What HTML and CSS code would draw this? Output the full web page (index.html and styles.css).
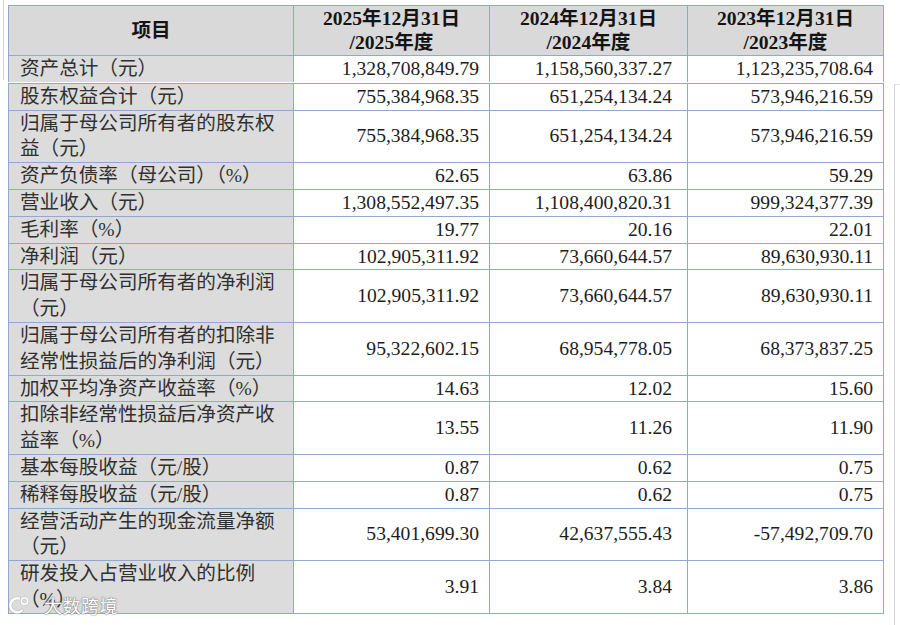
FILE: index.html
```html
<!DOCTYPE html>
<html lang="zh-CN">
<head>
<meta charset="utf-8">
<title>主要财务数据</title>
<link rel="stylesheet" href="styles.css">
</head>
<body>
<div class="page">
  <div class="frame-left"></div>
  <div class="frame-right"></div>
  <table class="fin">
    <colgroup>
      <col class="c-item">
      <col class="c-y1">
      <col class="c-y2">
      <col class="c-y3">
    </colgroup>
    <thead>
      <tr>
        <th>项目</th>
        <th>2025年12月31日<br>/2025年度</th>
        <th>2024年12月31日<br>/2024年度</th>
        <th>2023年12月31日<br>/2023年度</th>
      </tr>
    </thead>
    <tbody>
      <tr class="first">
        <td class="item">资产总计（元）</td>
        <td class="num">1,328,708,849.79</td>
        <td class="num mid">1,158,560,337.27</td>
        <td class="num">1,123,235,708.64</td>
      </tr>
      <tr class="seam"><td colspan="4"></td></tr>
      <tr>
        <td class="item">股东权益合计（元）</td>
        <td class="num">755,384,968.35</td>
        <td class="num mid">651,254,134.24</td>
        <td class="num">573,946,216.59</td>
      </tr>
      <tr>
        <td class="item">归属于母公司所有者的股东权益（元）</td>
        <td class="num">755,384,968.35</td>
        <td class="num mid">651,254,134.24</td>
        <td class="num">573,946,216.59</td>
      </tr>
      <tr>
        <td class="item">资产负债率（母公司）（%）</td>
        <td class="num">62.65</td>
        <td class="num mid">63.86</td>
        <td class="num">59.29</td>
      </tr>
      <tr>
        <td class="item">营业收入（元）</td>
        <td class="num">1,308,552,497.35</td>
        <td class="num mid">1,108,400,820.31</td>
        <td class="num">999,324,377.39</td>
      </tr>
      <tr>
        <td class="item">毛利率（%）</td>
        <td class="num">19.77</td>
        <td class="num mid">20.16</td>
        <td class="num">22.01</td>
      </tr>
      <tr>
        <td class="item">净利润（元）</td>
        <td class="num">102,905,311.92</td>
        <td class="num mid">73,660,644.57</td>
        <td class="num">89,630,930.11</td>
      </tr>
      <tr>
        <td class="item">归属于母公司所有者的净利润（元）</td>
        <td class="num">102,905,311.92</td>
        <td class="num mid">73,660,644.57</td>
        <td class="num">89,630,930.11</td>
      </tr>
      <tr>
        <td class="item">归属于母公司所有者的扣除非经常性损益后的净利润（元）</td>
        <td class="num">95,322,602.15</td>
        <td class="num mid">68,954,778.05</td>
        <td class="num">68,373,837.25</td>
      </tr>
      <tr>
        <td class="item">加权平均净资产收益率（%）</td>
        <td class="num">14.63</td>
        <td class="num mid">12.02</td>
        <td class="num">15.60</td>
      </tr>
      <tr>
        <td class="item">扣除非经常性损益后净资产收益率（%）</td>
        <td class="num">13.55</td>
        <td class="num mid">11.26</td>
        <td class="num">11.90</td>
      </tr>
      <tr>
        <td class="item">基本每股收益（元/股）</td>
        <td class="num">0.87</td>
        <td class="num mid">0.62</td>
        <td class="num">0.75</td>
      </tr>
      <tr>
        <td class="item">稀释每股收益（元/股）</td>
        <td class="num">0.87</td>
        <td class="num mid">0.62</td>
        <td class="num">0.75</td>
      </tr>
      <tr>
        <td class="item">经营活动产生的现金流量净额（元）</td>
        <td class="num">53,401,699.30</td>
        <td class="num mid">42,637,555.43</td>
        <td class="num">-57,492,709.70</td>
      </tr>
      <tr>
        <td class="item">研发投入占营业收入的比例（%）</td>
        <td class="num">3.91</td>
        <td class="num mid">3.84</td>
        <td class="num">3.86</td>
      </tr>
    </tbody>
  </table>
  <div class="watermark">
    <svg class="wm-icon" width="24" height="20" viewBox="0 0 24 20" aria-hidden="true">
      <path d="M11 3.5 A7 7 0 1 0 14 15.5" fill="none" stroke="#9a9a9a" stroke-width="3.6" stroke-linecap="round" opacity="0.5"/>
      <path d="M11 3.5 A7 7 0 1 0 14 15.5" fill="none" stroke="#fff" stroke-width="2.4" stroke-linecap="round"/>
      <circle cx="16.5" cy="6" r="3.2" fill="none" stroke="#9a9a9a" stroke-width="2.6" opacity="0.5"/>
      <circle cx="16.5" cy="6" r="3.2" fill="none" stroke="#fff" stroke-width="1.6"/>
      <circle cx="4" cy="6" r="1.4" fill="#fff"/>
    </svg>
    <span class="wm-text">大数跨境</span>
  </div>
</div>
</body>
</html>
```

FILE: styles.css
```css
html, body {
  margin: 0;
  padding: 0;
  background: #ffffff;
}

.page {
  position: relative;
  width: 900px;
  height: 625px;
  overflow: hidden;
  padding: 5px 0 0 8px;
  box-sizing: border-box;
}

.fin {
  border-collapse: collapse;
  table-layout: fixed;
  width: 875px;
  font-family: "Liberation Serif", "Noto Sans CJK SC", serif;
  font-size: 19.6px;
  color: #1c1c1c;
  border: 1px solid #7d9bcb;
}

.c-item { width: 285px; }
.c-y1 { width: 196px; }
.c-y2 { width: 198px; }
.c-y3 { width: 196px; }

.fin th,
.fin td {
  border: 1px solid #8fa9d3;
  padding: 0;
}

.fin th {
  background: #d9d9d9;
  font-weight: bold;
  line-height: 24px;
  padding-top: 1px;
  text-align: center;
  vertical-align: middle;
  color: #141414;
}

.fin td {
  line-height: 25.8px;
  vertical-align: middle;
}

.fin td.item {
  background: #dcdcdc;
  color: #303030;
  padding: 0 10px 0 11px;
  text-align: left;
}

.fin td.num {
  text-align: right;
  padding-right: 10px;
  background: #ffffff;
}

.fin td.num.mid {
  padding-right: 15px;
}

.fin tr.first td {
  border-bottom-style: hidden;
}

.fin tr.seam td {
  height: 1px;
  line-height: 1px;
  font-size: 1px;
  padding: 0;
  background: #ffffff;
  border-left-style: hidden;
  border-right-style: hidden;
  border-top-style: hidden;
}

.frame-left {
  position: absolute;
  left: 0;
  top: 0;
  width: 3px;
  height: 80px;
  border-right: 1px solid #d4d4d4;
}

.frame-right {
  position: absolute;
  left: 894px;
  top: 84px;
  width: 10px;
  height: 560px;
  border-left: 1px solid #d4d4d4;
  border-top: 1px solid #e2e2e2;
}

.watermark {
  position: absolute;
  left: 8px;
  top: 595px;
  display: flex;
  align-items: center;
  gap: 12px;
}

.wm-icon {
  display: block;
}

.wm-text {
  font-family: "Noto Sans CJK SC", sans-serif;
  font-size: 18px;
  line-height: 20px;
  color: #ffffff;
  letter-spacing: 0.5px;
  text-shadow: 0 0 1px #7a7a7a, 0 0 1px #7a7a7a, 0 0 2px #9a9a9a;
}
```
